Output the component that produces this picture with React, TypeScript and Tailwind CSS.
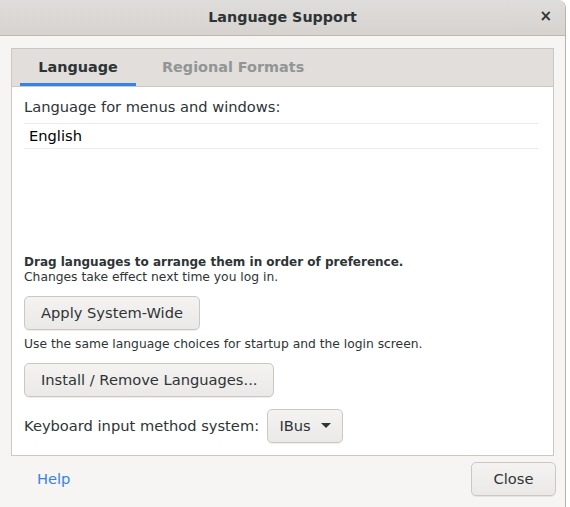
export default function App() {
    const btn =
        "rounded-[5px] border border-[#cdc7c2] bg-gradient-to-b from-[#f4f3f2] to-[#ebe9e7] text-[14.67px] shadow-[0_1px_0_rgba(0,0,0,0.07)]"
    return (
        <div
            className="w-[570px] h-[507px] bg-white overflow-hidden"
            style={{ fontFamily: '"DejaVu Sans", sans-serif' }}
        >
            <div className="w-[566px] h-[507px] flex flex-col bg-[#f6f5f4] border-r border-[#b6b3ad] rounded-tr-[8px] overflow-hidden text-[#2e3436]">
                {/* title bar */}
                <div className="relative h-[36px] shrink-0 flex items-center justify-center bg-gradient-to-b from-[#dfdddb] to-[#d6d3cf] border-b border-[#bfb8b1]">
                    <span className="text-[14.3px] font-bold">Language Support</span>
                    <span className="absolute right-[13px] top-[9px] text-[15px] font-bold leading-none">×</span>
                </div>

                {/* notebook */}
                <div className="mx-[11px] mt-[12px] h-[408px] flex flex-col border border-[#cdc7c2] bg-white">
                    <div className="h-[38px] shrink-0 flex items-stretch bg-[#e1dedb] border-b border-[#cdc7c2] px-[8px]">
                        <div className="w-[116px] flex items-center justify-center text-[14.4px] font-bold border-b-[3px] border-[#3584e4] pt-[3px]">
                            Language
                        </div>
                        <div className="ml-[10px] px-[16px] flex items-center text-[14.4px] font-bold text-[#929595] pt-[1px]">
                            Regional Formats
                        </div>
                    </div>

                    <div className="flex-1 flex flex-col px-[12px] pt-[10px] pb-[12px]">
                        <div className="text-[14.67px] leading-[20px]">Language for menus and windows:</div>
                        <div className="mt-[6px] mr-[3px] h-[26px] flex items-center px-[5px] border-y border-[#ebebeb] text-[14.67px] text-black">
                            English
                        </div>

                        <div className="mt-auto text-[12px] font-bold leading-[15px]">
                            Drag languages to arrange them in order of preference.
                        </div>
                        <div className="text-[12.3px] leading-[15px]">Changes take effect next time you log in.</div>

                        <button className={"mt-[11px] self-start h-[34px] px-[16px] " + btn}>
                            Apply System-Wide
                        </button>
                        <div className="mt-[7px] text-[12.3px] leading-[15px]">
                            Use the same language choices for startup and the login screen.
                        </div>
                        <button className={"mt-[11px] self-start h-[34px] px-[16px] " + btn}>
                            Install / Remove Languages...
                        </button>

                        <div className="mt-[12px] flex items-center gap-[8px]">
                            <span className="text-[14.67px]">Keyboard input method system:</span>
                            <button className={"h-[34px] w-[76px] flex items-center justify-center gap-[10px] " + btn}>
                                IBus
                                <svg width="10" height="6" viewBox="0 0 10 6">
                                    <path d="M0 0h10L5 5z" fill="#2e3436" />
                                </svg>
                            </button>
                        </div>
                    </div>
                </div>

                {/* action area */}
                <div className="flex items-center justify-between pl-[37px] pr-[9px] mt-[6px]">
                    <span className="text-[14.67px] text-[#3584e4] -mt-[1px]">Help</span>
                    <button className={"h-[34px] w-[85px] " + btn}>Close</button>
                </div>
            </div>
        </div>
    )
}
